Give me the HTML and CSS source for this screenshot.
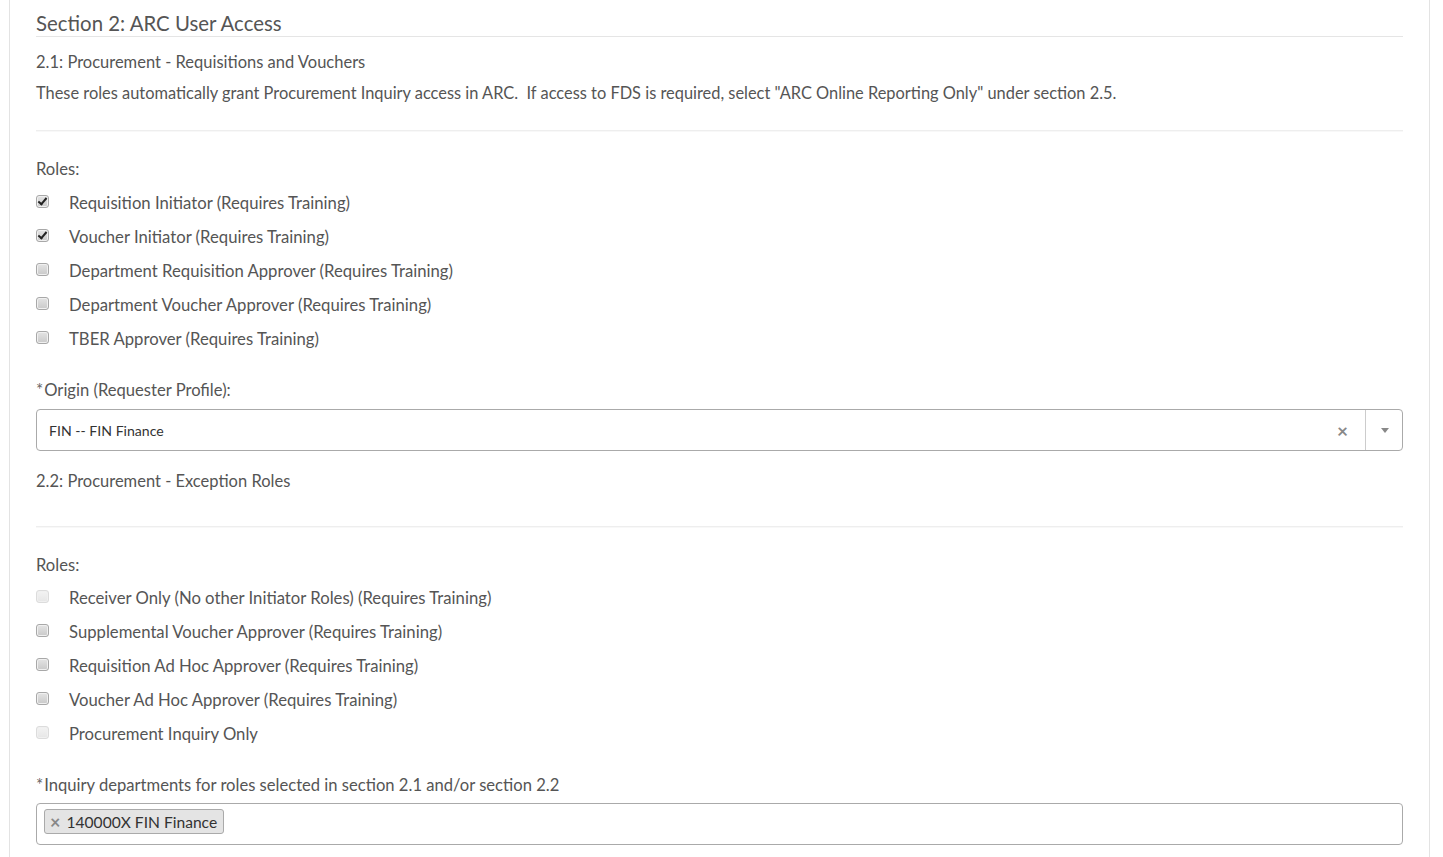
FILE: index.html
```html
<!DOCTYPE html>
<html lang="en">
<head>
    <meta charset="UTF-8">
    <meta name="viewport" content="width=device-width, initial-scale=1.0">
    <title>ARC User Access</title>
    <link rel="stylesheet" href="styles.css">
</head>
<body>
    <div class="panel">
        <h2 class="section-title">Section 2: ARC User Access</h2>

        <p class="sub-title">2.1: Procurement - Requisitions and Vouchers</p>
        <p class="note">These roles automatically grant Procurement Inquiry access in ARC.&nbsp; If access to FDS is required, select "ARC Online Reporting Only" under section 2.5.</p>
        <hr class="divider first">

        <div class="field-label">Roles:</div>
        <div class="checks first">
            <label class="check"><input type="checkbox" checked><span>Requisition Initiator (Requires Training)</span></label>
            <label class="check"><input type="checkbox" checked><span>Voucher Initiator (Requires Training)</span></label>
            <label class="check"><input type="checkbox"><span>Department Requisition Approver (Requires Training)</span></label>
            <label class="check"><input type="checkbox"><span>Department Voucher Approver (Requires Training)</span></label>
            <label class="check"><input type="checkbox"><span>TBER Approver (Requires Training)</span></label>
        </div>

        <div class="field-label req"><span class="star">*</span>Origin (Requester Profile):</div>
        <div class="select">
            <span class="select-value">FIN -- FIN Finance</span>
            <span class="select-clear">&times;</span>
            <span class="select-arrow"></span>
        </div>

        <p class="sub-title second">2.2: Procurement - Exception Roles</p>
        <hr class="divider second">

        <div class="field-label">Roles:</div>
        <div class="checks">
            <label class="check"><input type="checkbox" disabled><span>Receiver Only (No other Initiator Roles) (Requires Training)</span></label>
            <label class="check"><input type="checkbox"><span>Supplemental Voucher Approver (Requires Training)</span></label>
            <label class="check"><input type="checkbox"><span>Requisition Ad Hoc Approver (Requires Training)</span></label>
            <label class="check"><input type="checkbox"><span>Voucher Ad Hoc Approver (Requires Training)</span></label>
            <label class="check"><input type="checkbox" disabled><span>Procurement Inquiry Only</span></label>
        </div>

        <div class="field-label req"><span class="star">*</span>Inquiry departments for roles selected in section 2.1 and/or section 2.2</div>
        <div class="multi">
            <span class="tag"><span class="tag-x">&times;</span>140000X FIN Finance</span>
        </div>
    </div>
</body>
</html>
```
FILE: styles.css
```css
body {
    margin: 0;
    background: #fff;
    font-family: Lato, "Open Sans", sans-serif;
    color: #555;
}

.panel {
    margin-left: 9px;
    width: 1367px;
    height: 857px;
    padding: 10px 26px 0 26px;
    border-left: 1px solid #e3e3e3;
    border-right: 1px solid #e3e3e3;
    box-sizing: content-box;
    overflow: hidden;
}

.section-title {
    margin: 0;
    font-size: 20.4px;
    font-weight: normal;
    line-height: 26px;
    color: #555;
    border-bottom: 1px solid #e5e5e5;
}

p {
    margin: 0;
}

.sub-title {
    font-size: 16.5px;
    line-height: 22px;
    margin-top: 14px;
}
.sub-title.second {
    margin-top: 19px;
}

.note {
    font-size: 16.4px;
    line-height: 22px;
    margin-top: 9px;
}

.divider {
    border: 0;
    border-top: 1px solid #eee;
    border-bottom: 1px solid #f8f8f8;
    margin: 26px 0 26px 0;
}
.divider.second {
    margin-top: 34px;
}

.field-label {
    font-size: 16.6px;
    line-height: 22px;
}
.field-label.req {
    margin-top: 23px;
}
.star {
    font-size: 17px;
    margin-right: 1px;
    color: #666;
}

.checks {
    display: flex;
    flex-direction: column;
    margin-top: 5px;
}
.checks.first {
    margin-top: 6px;
}

.check {
    display: flex;
    align-items: center;
    height: 34px;
    font-size: 16.7px;
}
.check span {
    margin-left: 20px;
}

.check input {
    appearance: none;
    -webkit-appearance: none;
    margin: 0;
    width: 13px;
    height: 13px;
    border: 1px solid #a8a8a8;
    border-radius: 3px;
    background: linear-gradient(#e4e4e4, #c9c9c9);
    box-shadow: inset 0 0 0 1px #f0f0f0;
    position: relative;
    top: -2px;
}
.check input:checked::after {
    content: "";
    position: absolute;
    left: 3px;
    top: 0px;
    width: 3px;
    height: 7px;
    border: solid #222;
    border-width: 0 2px 2px 0;
    transform: rotate(40deg);
}
.check input:disabled {
    border-color: #dcdcdc;
    background: linear-gradient(#f3f3f3, #e6e6e6);
}

.select {
    display: flex;
    align-items: center;
    height: 40px;
    margin-top: 8px;
    border: 1px solid #aaa;
    border-radius: 4px;
    font-size: 14.1px;
    color: #333;
}
.select-value {
    flex: 1;
    padding-left: 12px;
}
.select-clear {
    color: #888;
    font-size: 19px;
    font-weight: bold;
    margin-right: 17px;
}
.select-arrow {
    width: 36px;
    height: 40px;
    border-left: 1px solid #ccc;
    position: relative;
}
.select-arrow::after {
    content: "";
    position: absolute;
    left: 15px;
    top: 18px;
    border-left: 4px solid transparent;
    border-right: 4px solid transparent;
    border-top: 5px solid #888;
}

.multi {
    margin-top: 7px;
    border: 1px solid #aaa;
    border-radius: 4px;
    padding: 5px 0 0 7px;
    box-sizing: border-box;
    height: 42px;
}
.tag {
    display: inline-flex;
    align-items: center;
    height: 25px;
    padding: 0 6px 0 5px;
    background: #e4e4e4;
    border: 1px solid #aaa;
    border-radius: 3px;
    font-size: 15.6px;
    color: #333;
    box-sizing: border-box;
}
.tag-x {
    color: #888;
    font-weight: bold;
    font-size: 18px;
    margin-right: 6px;
}
```
